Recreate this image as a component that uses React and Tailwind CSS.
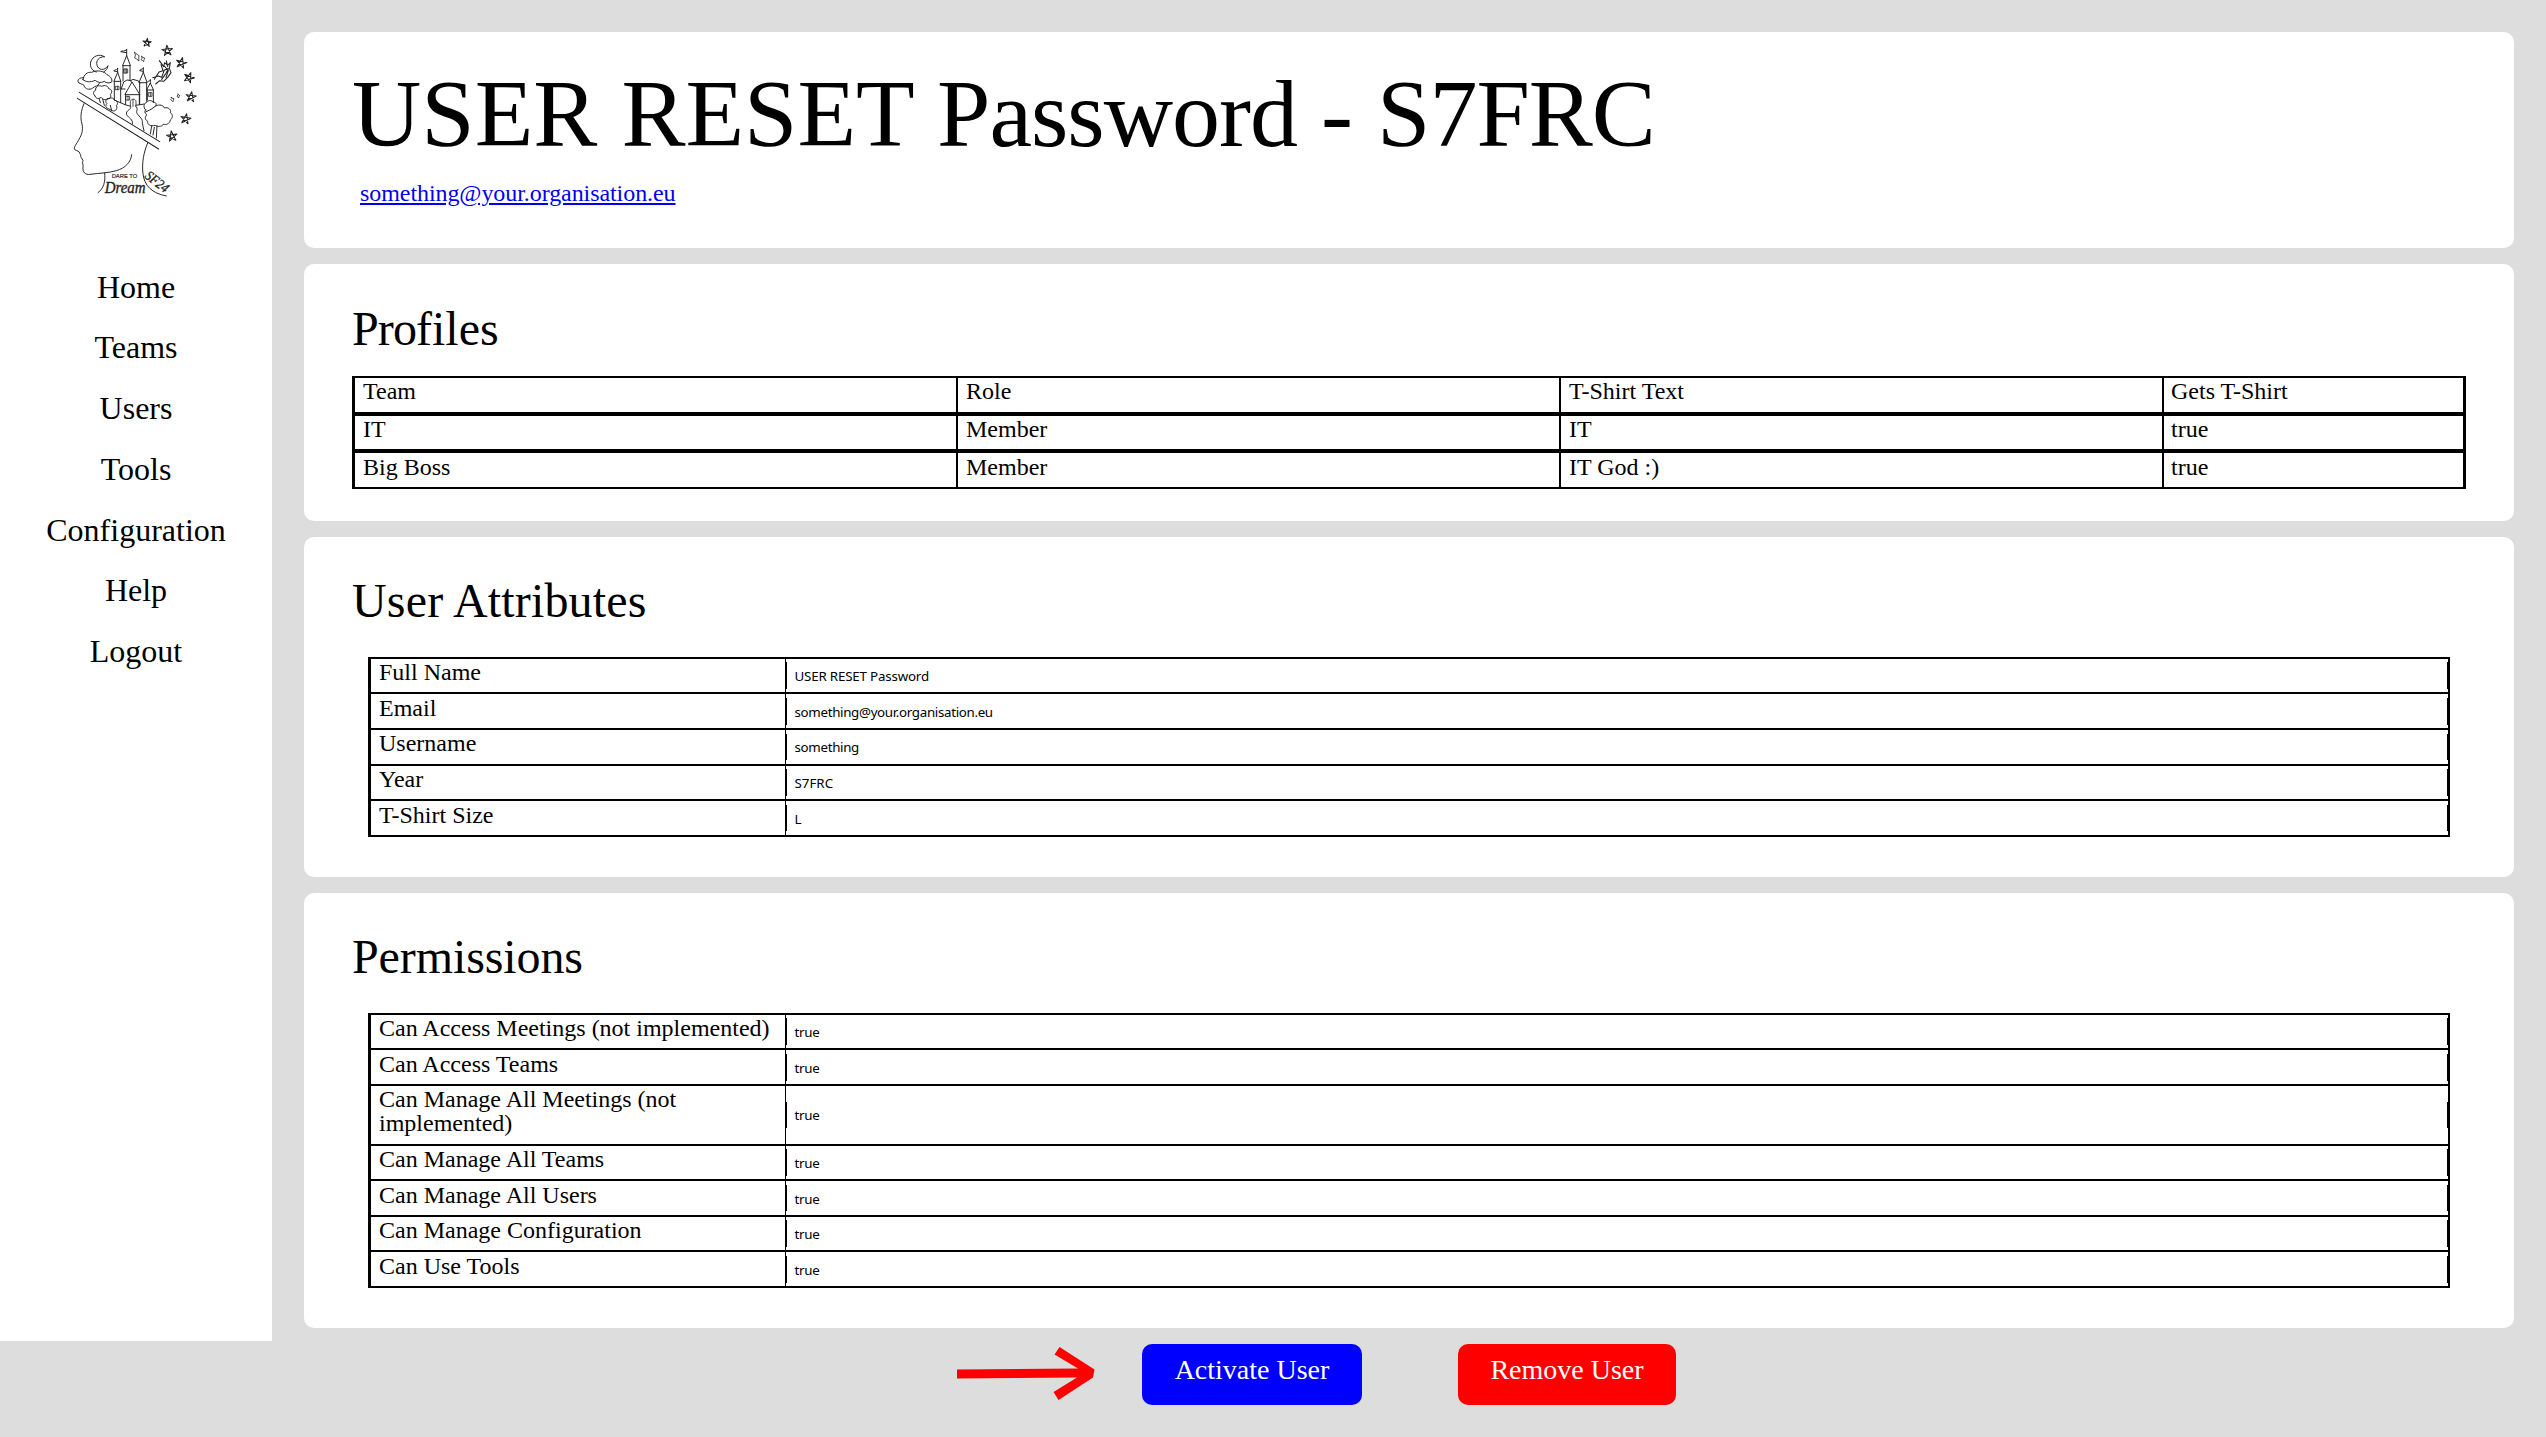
const star = (cx, cy, r, rot = 0) => {
  const order = [0, 2, 4, 1, 3];
  return (
    "M" +
    order
      .map((k) => {
        const a = ((k * 72 - 90 + rot) * Math.PI) / 180;
        return `${(cx + r * Math.cos(a)).toFixed(1)} ${(cy + r * Math.sin(a)).toFixed(1)}`;
      })
      .join("L") +
    "Z"
  );
};

const STARS = [
  [288, 68, 13, 5],
  [349, 92, 16.5, -5],
  [391, 129, 16.5, 12],
  [414, 173, 16, 20],
  [420, 231, 16, 8],
  [404, 297, 16, 10],
  [363, 349, 16.5, -8],
];

function Logo() {
  return (
    <svg viewBox="0 0 510 570" className="h-[190px] w-[170px]" fill="none" stroke="#222" strokeWidth="2.9" strokeLinejoin="round" strokeLinecap="round">
      {STARS.map(([x, y, r, a]) => (
        <path key={y} d={star(x, y, r, a)} strokeWidth="3.2" />
      ))}
      {/* sparkles */}
      <path d="M251 97l7 6 6 4-1 9 1 7-7-6-6-3 2-8zM272 109l4 3 5 2-2 5-1 6-4-4-4-2 3-4zM361 232l4 3 4 1-2 4-1 5-4-3-3-3 3-3zM381 222l2 3 4 2-3 3-1 4-3-3-2-3 3-3z" strokeWidth="2.4" />
      {/* moon */}
      <path d="M160 110C146 100 124 108 119 126C115 142 126 154 136 156M160 110C144 110 134 122 138 136C142 150 160 154 171 137C170 147 164 152 158 156" />
      {/* clouds */}
      <path d="M96 179C98 163 110 155 122 157C138 149 160 153 168 164C178 168 185 178 182 186C176 190 166 190 160 184C148 191 138 185 132 181C118 188 104 186 96 179Z" />
      <path d="M98 173C84 172 76 182 84 189C92 194 98 192 99 197C102 208 116 210 124 205C132 196 142 200 145 190" />
      {/* fairy */}
      <path d="M325 122L338 140L341 128L350 136L358 128L355 145L360 158L350 172L338 184L326 182L314 192M305 173L322 168L332 172L340 150L352 146L345 160L332 178M310 178L324 156L336 152L330 134M340 138L352 152L345 172M346 122L350 140" strokeWidth="3.2" />
      {/* castle */}
      <path d="M227 88V108M227 89C219 96 214 91 209 95L226 98M215 136L227 107L238 136ZM216 137V183M237 137V180" />
      <path d="M219 147h11v12h-11zM222 147v12M226 147v12" strokeWidth="2.4" />
      <path d="M200 145V158M200 146C194 152 190 149 188 153L199 155M189 183L200 157L209 183ZM190 184V240M209 184V248" />
      <path d="M194 199h10v10h-10zM199 199v10" strokeWidth="2.4" />
      <path d="M277 143V158M277 145C271 150 268 147 266 152L276 154M264 187L277 157L288 187ZM266 188V252M287 188V244" />
      <path d="M298 179V190M298 181C293 184 291 183 289 186M287 209L298 189L307 209ZM289 210V240M307 210V248" />
      <path d="M293 218h10v11h-10zM298 218v11" strokeWidth="2.4" />
      <path d="M211 206L218 186L228 180L239 182L246 178L263 183L266 190M222 223L243 186L266 223ZM224 224V252M265 224V254M210 207L222 207M236 180L243 187M190 240L222 254M222 254L236 258M254 256L280 252" />
      <path d="M225 229h11v11h-11zM231 229v11M238 258V245C240 235 254 235 255 245V259M246 238V259" strokeWidth="2.4" />
      {/* trees */}
      <path d="M132 228C124 222 128 212 134 211C132 200 144 194 152 199C162 194 172 198 173 206C184 208 184 218 178 223C182 232 176 237 168 236C164 242 154 238 150 232C144 238 134 236 132 228ZM144 235L148 248M155 237L160 256M168 238C176 232 188 232 190 240C200 242 202 252 196 257C202 266 192 276 184 272L172 266C164 264 162 256 168 251C162 246 164 240 168 238ZM178 256L182 272" />
      <path d="M284 270C276 262 278 250 286 248C290 240 302 240 306 246C314 246 318 252 314 258C326 252 338 256 340 264C352 260 362 270 358 278C368 284 364 296 358 300C356 312 344 316 338 312C332 322 318 320 312 316C300 320 288 314 290 304C280 298 282 288 288 284C280 280 280 274 284 270ZM284 276L300 268L314 258M302 318L298 342M318 318L316 354M310 322L306 345" />
      {/* path leading to the castle */}
      <path d="M239 259C244 270 222 270 227 284C232 294 248 298 244 312M254 259C264 266 254 272 258 280C266 292 276 296 274 310L279 332" />
      {/* open lid */}
      <path d="M85 217L326 365M79 235L323 387" strokeWidth="3.2" />
      {/* head */}
      <path d="M99 251C90 272 87 292 93 312C97 332 92 344 84 358C78 370 66 384 71 389C78 393 86 393 86 400C92 406 87 410 91 413L96 421C92 430 98 434 96 440C94 458 104 465 117 463C148 459 172 459 196 452C224 444 240 426 242 404" />
      <path d="M161 459C164 484 158 506 141 518M290 369C278 396 272 430 276 462C280 496 302 520 346 528" />
      <g stroke="#222" fill="#222">
        <text x="182" y="473" fontSize="17.5" textLength="77" lengthAdjust="spacingAndGlyphs" fontFamily="Liberation Sans, sans-serif" strokeWidth="0.5">DARE TO</text>
        <text x="161" y="519" fontSize="49" fontStyle="italic" textLength="123" lengthAdjust="spacingAndGlyphs" fontFamily="Liberation Serif, serif" strokeWidth="1">Dream</text>
        <text x="0" y="0" transform="translate(279 472) rotate(38)" fontSize="42" fontStyle="italic" textLength="78" lengthAdjust="spacingAndGlyphs" fontFamily="Liberation Serif, serif" strokeWidth="1">SF24</text>
      </g>
    </svg>
  );
}

const NAV = ["Home", "Teams", "Users", "Tools", "Configuration", "Help", "Logout"];

const PROFILES = [
  { cells: ["Team", "Role", "T-Shirt Text", "Gets T-Shirt"], size: "h-[38px]", pad: "pt-px" },
  { cells: ["IT", "Member", "IT", "true"], size: "h-[37px]", pad: "pt-px" },
  { cells: ["Big Boss", "Member", "IT God :)", "true"], size: "h-[38px]", pad: "pt-[2px]" },
];

const CELL_EDGES = ["pl-2", "border-l-2 border-black pl-2", "border-l-2 border-black pl-2", "border-l-2 border-black pl-[7px]"];

const SHORT = { row: "h-[35px]", label: "pt-px", input: "mt-[3px] h-[27px] leading-[28px]", tracking: "tracking-[-0.25px]" };
const TALL = { row: "h-[36px]", label: "pt-[2px]", input: "mt-[4px] h-[27px] leading-[28px]", tracking: "tracking-[-0.25px]" };

const ATTRIBUTES = [
  { name: "Full Name", value: "USER RESET Password", ...SHORT, tracking: "tracking-[-0.18px]" },
  { name: "Email", value: "something@your.organisation.eu", ...TALL, tracking: "tracking-[-0.32px]" },
  { name: "Username", value: "something", ...TALL, label: "pt-px", input: "mt-[4px] h-[26px] leading-[26px]", tracking: "tracking-[-0.32px]" },
  { name: "Year", value: "S7FRC", ...SHORT, tracking: "tracking-normal" },
  { name: "T-Shirt Size", value: "L", ...TALL, input: "mt-[4px] h-[26px] leading-[28px]" },
];

const PERMISSIONS = [
  { name: "Can Access Meetings (not implemented)", value: "true", ...SHORT },
  { name: "Can Access Teams", value: "true", ...TALL },
  { name: "Can Manage All Meetings (not implemented)", value: "true", ...SHORT, row: "h-[60px]", input: "mt-[16px] h-[26px] leading-[26px]" },
  { name: "Can Manage All Teams", value: "true", ...SHORT },
  { name: "Can Manage All Users", value: "true", ...TALL, input: "mt-[4px] h-[26px] leading-[28px]" },
  { name: "Can Manage Configuration", value: "true", ...SHORT },
  { name: "Can Use Tools", value: "true", ...TALL },
];

function FieldTable({ rows }) {
  return (
    <div className="mx-4 mt-7 border-2 border-l-[3px] border-b-0 border-black text-2xl leading-6">
      {rows.map((r) => (
        <div key={r.name} className={`flex border-b-2 border-black ${r.row}`}>
          <div className={`w-[414px] shrink-0 px-2 ${r.label}`}>{r.name}</div>
          <div className="flex-1 border-l border-black">
            <div className={`border-x border-black pl-[7.5px] font-['Noto_Sans',sans-serif] text-[13.333px] ${r.input} ${r.tracking}`}>{r.value}</div>
          </div>
        </div>
      ))}
    </div>
  );
}

function Card({ className, children }) {
  return <section className={`rounded-[10px] bg-white px-12 ${className}`}>{children}</section>;
}

function Heading({ className = "", children }) {
  return <h2 className={`text-[48px] leading-[56px] ${className}`}>{children}</h2>;
}

export default function App() {
  return (
    <div className="flex h-[1437px] w-[2546px] items-start overflow-hidden bg-[#dddddd] font-['Liberation_Serif',serif] text-black">
      <aside className="flex h-[1341px] w-[272px] shrink-0 flex-col items-center bg-white pt-5">
        <Logo />
        <nav className="mt-[46.5px] flex flex-col items-center text-[32px] leading-[60.8px]">
          {NAV.map((n) => (
            <a key={n}>{n}</a>
          ))}
        </nav>
      </aside>
      <main className="flex flex-1 flex-col gap-4 px-8 pt-8">
        <Card className="h-[216px] pt-6">
          <h1 className="text-[96px] leading-[116px]">
            USER RESET <span className="tracking-[-1px]">Password</span> - <span className="tracking-[-1px]">S7FRC</span>
          </h1>
          <a className="mt-[7px] ml-2 block w-fit text-2xl leading-7 tracking-[-0.07px] text-[#0000ee] underline">something@your.organisation.eu</a>
        </Card>

        <Card className="h-[257px] pt-[37px]">
          <Heading>
            <span className="tracking-[-0.9px]">Pro</span>files
          </Heading>
          <div className="mt-[19px] border-x-[3px] border-black text-2xl leading-6">
            {PROFILES.map((r) => (
              <div key={r.cells[0]} className={`grid grid-cols-[601px_603px_603px_1fr] border-y-2 border-black ${r.size}`}>
                {r.cells.map((c, i) => (
                  <div key={i} className={`${r.pad} ${CELL_EDGES[i]}`}>{c}</div>
                ))}
              </div>
            ))}
          </div>
        </Card>

        <Card className="h-[340px] pt-9">
          <Heading className="tracking-[0.18px]">User Attributes</Heading>
          <FieldTable rows={ATTRIBUTES} />
        </Card>

        <Card className="h-[435px] pt-9">
          <Heading className="tracking-[-0.1px]">Permissions</Heading>
          <FieldTable rows={PERMISSIONS} />
        </Card>

        <div className="flex items-start pl-[652px] text-[28px] leading-[51px] text-white">
          <svg viewBox="0 0 140 61" className="mr-[46px] h-[61px] w-[140px]" fill="#ff0000">
            <path d="M1 25.500L122 24.500L98.500 10.500L103.500 3L138.500 25.500L137 33.500L102.500 56L97.500 48L121 33.500L1 34.500Z" />
          </svg>
          <button className="h-[61px] w-[220px] rounded-[10px] bg-[#0000ff] pb-[10px]">Activate User</button>
          <button className="ml-24 h-[61px] w-[218px] rounded-[10px] bg-[#ff0000] pb-[10px]">Remove User</button>
        </div>
      </main>
    </div>
  );
}
